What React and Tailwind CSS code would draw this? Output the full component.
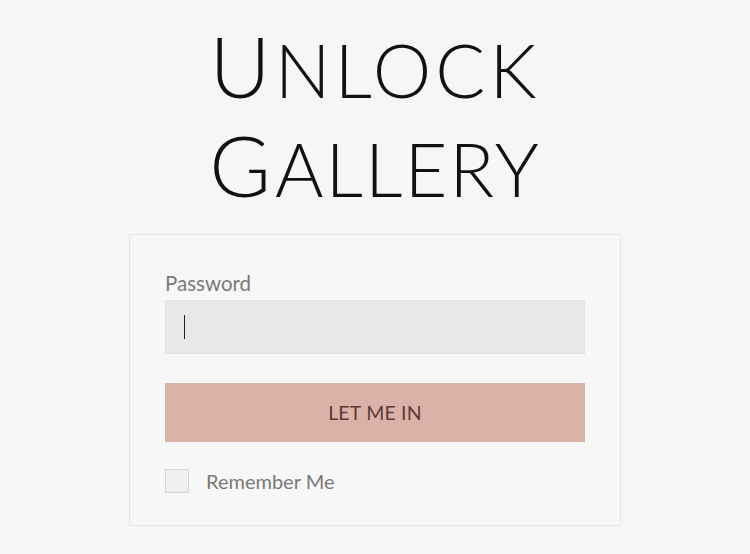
export default function App() {
  return (
    <div className="min-h-[554px] w-full bg-[#f6f6f6] flex flex-col items-center pt-[16px] font-['Lato','Liberation_Sans',sans-serif]">
      <h1 className="text-center text-[#111] font-['Lato',sans-serif] font-light tracking-[4px]">
        <div className="h-[99px] leading-[99px]">
          <span className="text-[84px] leading-[99px]">U</span>
          <span className="text-[74px] leading-[99px]">NLOCK</span>
        </div>
        <div className="h-[99px] leading-[99px]">
          <span className="text-[84px] leading-[99px]">G</span>
          <span className="text-[74px] leading-[99px] tracking-[2px]">ALLERY</span>
        </div>
      </h1>

      <div className="mt-[20px] w-[492px] border border-[#e4e4e4] bg-[#f7f7f7] px-[35px] pt-[36px] pb-[29px]">
        <label className="block text-[20.5px] leading-[24px] text-[#7a7a7a]">Password</label>
        <div className="mt-[5px] h-[54px] w-full border border-[#e2e2e2] bg-[#e8e8e8] flex items-center pl-[18px]">
          <span className="block h-[24px] w-px bg-[#222]"></span>
        </div>

        <button className="mt-[29px] h-[59px] w-full bg-[#dbb2a8] text-[19.5px] text-[#5b3a34] tracking-[0.2px]">
          LET ME IN
        </button>

        <div className="mt-[24px] flex items-center gap-[17px]">
          <span className="block h-[24px] w-[24px] border border-[#d4d4d4] bg-[#f0f0f0]"></span>
          <span className="text-[20px] text-[#7a7a7a]">Remember Me</span>
        </div>
      </div>
    </div>
  );
}
